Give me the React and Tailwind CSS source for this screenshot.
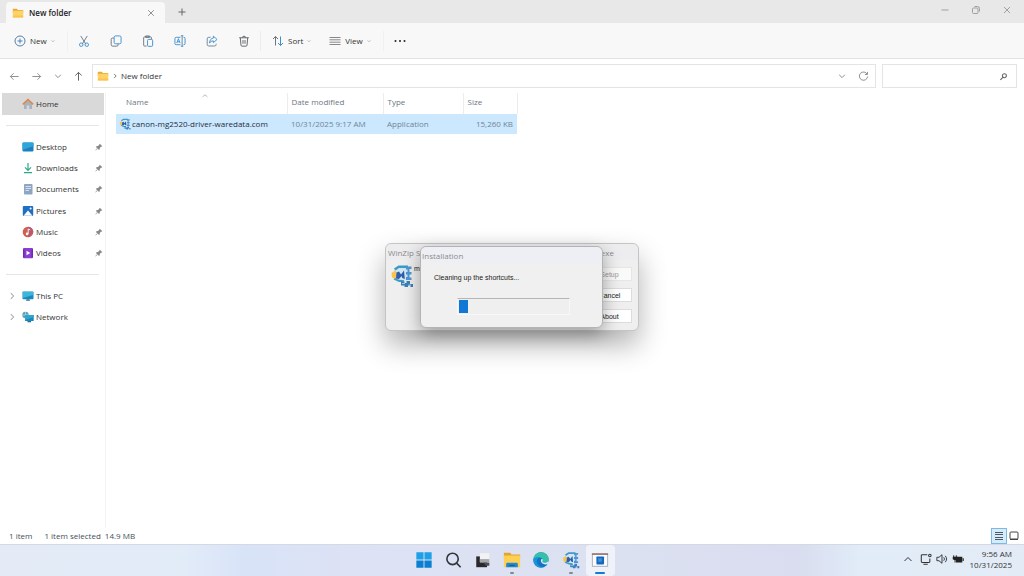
import React, { useState } from 'react';

const ChevronDown = ({ className }) => (
  <svg viewBox="0 0 10 10" className={className} fill="none" stroke="currentColor" strokeWidth="1.2">
    <path d="M1.5 3.5 5 7l3.5-3.5" />
  </svg>
);

const ChevronRight = ({ className }) => (
  <svg viewBox="0 0 10 10" className={className} fill="none" stroke="currentColor" strokeWidth="1.3">
    <path d="M3.5 1.5 7 5 3.5 8.5" />
  </svg>
);

const FolderIcon = ({ className }) => (
  <svg viewBox="0 0 12 12" className={className}>
    <path d="M.8 1.8h4l1.2 1.3h5.2V6H.8z" fill="#e9a93a" />
    <rect x=".8" y="3.8" width="10.4" height="6.8" rx=".6" fill="#ffd266" />
    <path d="M.8 8.6h10.4V10a.6.6 0 0 1-.6.6H1.4a.6.6 0 0 1-.6-.6z" fill="#f9c452" />
  </svg>
);

const WinZipIcon = ({ className }) => (
  <svg viewBox="0 0 24 24" className={className}>
    <path d="M4 4 9 2h9v14l-8 2-6-3z" fill="#cfe6f5" />
    <path d="M4 4.5 8.500 1.500H18V4H9L5.500 6.500z" fill="#3f9bc4" />
    <path d="M1.500 9 5 6.500l3 3.500-1 6-5-2.500z" fill="#f4c552" />
    <path d="M6.500 8.500 9 7.500l2 3 3-4 .8 8.500-2.500-1-.8-2-2.500 3-3-.5z" fill="#2f5cab" />
    <path d="M3.500 15.500 9 18h5v-1.800l-5-.4-4-1.800z" fill="#3f9bc4" />
    <path d="M16 2.500h5.500V5h-2v3h2v2.500h-2v3h2V16H16v-3h1.500v-2.500H16V8h1.500V5.500H16z" fill="#4f97d3" />
    <path d="M11 17.500h3.500V19h2v-2H20v3h3v3h-2.500v-1.500H18V23h-3.500v-1.500H11z" fill="#3a80ba" />
    <path d="M12 19.500h3M18.500 21h2.500" stroke="#bfe0f5" strokeWidth=".8" />
  </svg>
);

const PinIcon = () => (
  <svg viewBox="0 0 10 10" className="size-2" fill="#85898e">
    <path d="M6 .8 9.2 4l-1 .6-.5-.1L6 6.3l-.2 1.900-.8.5L3.3 7 1 9.3l-.5-.5L2.800 6.5 1.2 4.9l.6-.8 1.900-.2 1.800-1.700-.1-.5z" />
  </svg>
);

const HomeIcon = () => (
  <svg viewBox="0 0 12 12" className="size-3">
    <path d="M2 5.500 6 2l4 3.500V11H7.300V7.500H4.700V11H2z" fill="#a9b3bd" />
    <path d="M.8 6.400 6 1.600l5.200 4.800" fill="none" stroke="#e2854a" strokeWidth="1.5" />
  </svg>
);

const DesktopIcon = () => (
  <svg viewBox="0 0 12 12" className="size-3">
    <rect x=".5" y="1.5" width="11" height="9" rx="1" fill="#1c7fc0" />
    <path d="M1.500 1.500h9a1 1 0 0 1 1 1V5L.5 9V2.500a1 1 0 0 1 1-1z" fill="#2fa6d8" />
  </svg>
);

const DownloadsIcon = () => (
  <svg viewBox="0 0 12 12" className="size-3" fill="none" stroke="#2ea888" strokeWidth="1.2">
    <path d="M6 1v7M3 5.300l3 3 3-3M2 10.700h8" />
  </svg>
);

const DocumentsIcon = () => (
  <svg viewBox="0 0 12 12" className="size-3">
    <rect x="2" y="1" width="8.5" height="10.5" rx=".8" fill="#8fa5c4" />
    <path d="M3.500 3.500h5.500M3.500 5.500h5.500M3.500 7.500h3.500" stroke="#dfe8f3" strokeWidth=".9" />
  </svg>
);

const PicturesIcon = () => (
  <svg viewBox="0 0 12 12" className="size-3">
    <rect x=".8" y="1" width="10.4" height="10" rx="1" fill="#1f6fc4" />
    <path d="M1.500 10.800 6 5.500l4.500 5.300z" fill="#fff" />
    <circle cx="8.600" cy="3.600" r="1" fill="#fff" />
  </svg>
);

const MusicIcon = () => (
  <svg viewBox="0 0 12 12" className="size-3">
    <circle cx="6" cy="6" r="5.3" fill="#d0604f" />
    <path d="M6 .7A5.300 5.300 0 0 1 11.300 6L6 11.300z" fill="#b65a74" />
    <path d="M6.200 7.800V3l2 .9" fill="none" stroke="#fff" strokeWidth=".9" />
    <circle cx="5.100" cy="7.900" r="1.300" fill="#fff" />
  </svg>
);

const VideosIcon = () => (
  <svg viewBox="0 0 12 12" className="size-3">
    <rect x="1" y="1" width="10" height="10.2" rx="1" fill="#8a3fd1" />
    <path d="M1 2.200h1.500v8H1zM9.500 2.200H11v8H9.500z" fill="#6b2bb0" />
    <path d="M4.500 3.800 8.300 6l-3.800 2.200z" fill="#fff" />
  </svg>
);

const PcIcon = () => (
  <svg viewBox="0 0 12 12" className="size-3">
    <rect x=".5" y="1.5" width="11" height="7.8" rx=".8" fill="#1988bd" />
    <path d="M1 2h10v3L1 8z" fill="#3bb6dc" />
    <path d="M4.500 9.300h3l.5 1.500H4z" fill="#28708f" />
  </svg>
);

const NetworkIcon = () => (
  <svg viewBox="0 0 12 12" className="size-3">
    <circle cx="3.5" cy="4" r="3.2" fill="#5e9fb8" />
    <path d="M.5 4h6M3.500 1v6" stroke="#cfe6ef" strokeWidth=".6" />
    <rect x="3" y="4" width="8.7" height="6" rx=".6" fill="#1988bd" />
    <path d="M3 4h8.700v2L3 9z" fill="#2fa6d0" />
    <path d="M5.500 10h3.500v1.300H5.500z" fill="#28708f" />
  </svg>
);

const toolIcons = [
  {
    label: 'Cut',
    icon: (
      <>
        <path d="M3 1l5.500 9M10 1 4.500 10" stroke="#6a7580" />
        <circle cx="3.5" cy="10.5" r="1.9" stroke="#3f8fcb" />
        <circle cx="9.5" cy="10.5" r="1.9" stroke="#3f8fcb" />
      </>
    ),
  },
  {
    label: 'Copy',
    icon: (
      <>
        <rect x="4.5" y="1" width="7.5" height="8.5" rx="1.5" stroke="#3f8fcb" />
        <path d="M4.300 3.300H2.800A1.500 1.500 0 0 0 1.300 4.800v5.500a1.800 1.800 0 0 0 1.800 1.800h4.200a1.500 1.500 0 0 0 1.500-1.500V9.600" stroke="#6a7580" />
      </>
    ),
  },
  {
    label: 'Paste',
    icon: (
      <>
        <path d="M5 12H2.800a1 1 0 0 1-1-1V3a1 1 0 0 1 1-1h6.400a1 1 0 0 1 1 1v1.500M4 2.600V1h4v1.600z" stroke="#6a7580" />
        <rect x="6" y="4.8" width="5.5" height="7.5" rx="1" stroke="#3f8fcb" />
      </>
    ),
  },
  {
    label: 'Rename',
    icon: (
      <>
        <path d="M7 2.500H2.500A1.500 1.500 0 0 0 1 4v5a1.500 1.500 0 0 0 1.500 1.500H7M10.300 2.500A1.500 1.500 0 0 1 12 4v5a1.500 1.500 0 0 1-1.700 1.500" stroke="#3f8fcb" />
        <path d="M3 8.800 4.800 4l1.800 4.800M3.600 7.300H6" stroke="#3f8fcb" />
        <path d="M7.500.8h2.600M7.500 12.200h2.600M8.800.8v11.400" stroke="#4a86b8" />
      </>
    ),
  },
  {
    label: 'Share',
    icon: (
      <>
        <path d="M5 2.500H3A1.700 1.700 0 0 0 1.300 4.200v6A1.700 1.700 0 0 0 3 11.900h6.300A1.700 1.700 0 0 0 11 10.200V9.500" stroke="#6a8296" />
        <path d="M8 1.300 12 4.800 8 8.300V6.400C5.800 6.400 4.600 7.200 3.800 8.800 4 5.500 5.500 3.600 8 3.300z" stroke="#3f8fcb" />
      </>
    ),
  },
  {
    label: 'Delete',
    icon: (
      <>
        <path d="M1.300 3h10.400M4.800 3a1.700 1.700 0 0 1 3.400 0M2.500 3l.7 8a1.200 1.200 0 0 0 1.200 1.100h4.200A1.200 1.200 0 0 0 9.800 11l.7-8M5.400 5.500v4M7.600 5.500v4" stroke="#5d6165" />
      </>
    ),
  },
];

const quickAccess = [
  { label: 'Desktop', Icon: DesktopIcon },
  { label: 'Downloads', Icon: DownloadsIcon },
  { label: 'Documents', Icon: DocumentsIcon },
  { label: 'Pictures', Icon: PicturesIcon },
  { label: 'Music', Icon: MusicIcon },
  { label: 'Videos', Icon: VideosIcon },
];

const drives = [
  { label: 'This PC', Icon: PcIcon },
  { label: 'Network', Icon: NetworkIcon },
];

const files = [
  { name: 'canon-mg2520-driver-waredata.com', modified: '10/31/2025 9:17 AM', type: 'Application', size: '15,260 KB' },
];

const TitleBar = () => (
  <header className="flex h-[23px] items-stretch bg-[#e8e8e8] pl-1.5">
    <div className="mt-0.5 flex w-[159px] items-center rounded-t bg-[#f8f8f8] pr-2.5 pl-1.5">
      <FolderIcon className="size-3" />
      <span className="ml-[5px] flex-1 font-semibold text-[#222]">New folder</span>
      <button type="button" aria-label="Close tab" className="text-[#777]">
        <svg viewBox="0 0 10 10" className="size-2" fill="none" stroke="currentColor">
          <path d="M1.500 1.500l7 7M8.500 1.500l-7 7" />
        </svg>
      </button>
    </div>
    <button type="button" aria-label="New tab" className="ml-3 text-[#666]">
      <svg viewBox="0 0 10 10" className="size-2.5" fill="none" stroke="currentColor">
        <path d="M5 1.500v7M1.500 5h7" />
      </svg>
    </button>
    <div className="ml-auto flex h-5 items-center gap-[21px] pr-3 text-[#a0a0a0]">
      <button type="button" aria-label="Minimize">
        <svg viewBox="0 0 10 10" className="size-2.5" fill="none" stroke="currentColor">
          <path d="M1.500 5h7" />
        </svg>
      </button>
      <button type="button" aria-label="Restore">
        <svg viewBox="0 0 10 10" className="size-2.5" fill="none" stroke="currentColor">
          <rect x="1.5" y="3" width="5.5" height="5.5" rx="1" />
          <path d="M3.500 1.500h3A2 2 0 0 1 8.500 3.500v3" />
        </svg>
      </button>
      <button type="button" aria-label="Close">
        <svg viewBox="0 0 10 10" className="size-2.5" fill="none" stroke="currentColor">
          <path d="M2 2l6 6M8 2l-6 6" />
        </svg>
      </button>
    </div>
  </header>
);

const Toolbar = () => (
  <div className="flex h-9 items-center border-b border-[#e3e3e3] bg-[#f8f8f8] pl-3.5 text-[#333]">
    <button type="button" className="flex w-[53px] items-center">
      <svg viewBox="0 0 12 12" className="size-3" fill="none">
        <circle cx="6" cy="6" r="5" stroke="#5b7f9e" />
        <path d="M6 3.500v5M3.500 6h5" stroke="#3a87c8" />
      </svg>
      <span className="ml-1 flex-1 text-left">New</span>
      <ChevronDown className="mr-3 size-1 text-[#777]" />
    </button>
    <div className="h-5 w-px bg-[#f0f0f0]" />
    {toolIcons.map((tool) => (
      <button key={tool.label} type="button" aria-label={tool.label} className="flex w-8 justify-center">
        <svg viewBox="0 0 13 13" className="size-3" fill="none">{tool.icon}</svg>
      </button>
    ))}
    <div className="h-5 w-px bg-[#ececec]" />
    <button type="button" className="ml-[11px] flex items-center">
      <svg viewBox="0 0 12 12" className="size-3" fill="none">
        <path d="M3.500 10.500v-9M1 4l2.500-2.500L6 4" stroke="#6a7580" />
        <path d="M8.500 1.500v9M6 8l2.500 2.500L11 8" stroke="#3f8fcb" />
      </svg>
      <span className="mr-1 ml-1">Sort</span>
      <ChevronDown className="size-1 text-[#777]" />
    </button>
    <button type="button" className="ml-[18px] flex items-center">
      <svg viewBox="0 0 12 12" className="size-3" fill="none" stroke="#888">
        <path d="M.5 2.500h11M.5 4.800h11M.5 7.200h11M.5 9.500h11" />
      </svg>
      <span className="mr-1 ml-1">View</span>
      <ChevronDown className="size-1 text-[#777]" />
    </button>
    <div className="ml-3 h-5 w-px bg-[#f0f0f0]" />
    <button type="button" aria-label="See more" className="ml-2.5">
      <svg viewBox="0 0 12 12" className="size-3" fill="#222">
        <circle cx="1.500" cy="6" r="1" />
        <circle cx="6" cy="6" r="1" />
        <circle cx="10.500" cy="6" r="1" />
      </svg>
    </button>
  </div>
);

const AddressBar = () => (
  <div className="flex h-[34px] items-center pr-[7px] text-[#888]">
    <div className="flex w-[92px] items-center justify-between pr-2 pl-[9px]">
      <button type="button" aria-label="Back">
        <svg viewBox="0 0 12 12" className="size-[11px]" fill="none" stroke="currentColor">
          <path d="M10.500 6h-9M5 2.500 1.500 6 5 9.500" />
        </svg>
      </button>
      <button type="button" aria-label="Forward">
        <svg viewBox="0 0 12 12" className="size-[11px]" fill="none" stroke="currentColor">
          <path d="M1.500 6h9M7 2.500 10.500 6 7 9.500" />
        </svg>
      </button>
      <button type="button" aria-label="Recent locations">
        <ChevronDown className="size-2" />
      </button>
      <button type="button" aria-label="Up" className="text-[#555]">
        <svg viewBox="0 0 12 12" className="size-[11px]" fill="none" stroke="currentColor">
          <path d="M6 10.500v-9M2.500 5 6 1.500 9.500 5" />
        </svg>
      </button>
    </div>
    <div className="flex h-6 flex-1 items-center border border-[#e4e4e4] bg-white pr-1.5 pl-1">
      <FolderIcon className="size-3" />
      <ChevronRight className="mx-[3px] size-1.5 text-[#555]" />
      <a href="#" className="flex-1 text-[#333]">New folder</a>
      <button type="button" aria-label="Previous locations">
        <ChevronDown className="size-2" />
      </button>
      <button type="button" aria-label="Refresh" className="ml-3">
        <svg viewBox="0 0 12 12" className="size-[11px]" fill="none" stroke="currentColor">
          <path d="M10 3.500A4.500 4.500 0 1 0 10.500 6M10.300 1v2.800H7.500" />
        </svg>
      </button>
    </div>
    <label className="ml-1.5 flex h-6 w-[135px] items-center border border-[#e4e4e4] bg-white pr-2">
      <input type="text" aria-label="Search" className="min-w-0 flex-1 px-2 outline-none" />
      <svg viewBox="0 0 10 10" className="size-[9px]" fill="none" stroke="#666" strokeWidth="1.2">
        <circle cx="6" cy="4.2" r="2.2" />
        <path d="M4.300 5.900 1.500 8.800" />
      </svg>
    </label>
  </div>
);

const Sidebar = () => (
  <nav className="w-[106px] border-r border-[#f3f3f3] text-[#333]">
    <a href="#" className="mr-px ml-0.5 flex h-[22px] items-center bg-[#d9d9d9] pl-5">
      <HomeIcon />
      <span className="ml-0.5">Home</span>
    </a>
    <div className="mx-1.5 mt-2.5 h-px bg-[#e6e6e6]" />
    <ul className="mt-2.5 grid h-32 grid-rows-6">
      {quickAccess.map(({ label, Icon }) => (
        <li key={label} className="flex items-center pr-0.5 pl-[22px]">
          <a href="#" className="flex flex-1 items-center">
            <Icon />
            <span className="ml-0.5">{label}</span>
          </a>
          <PinIcon />
        </li>
      ))}
    </ul>
    <div className="mx-1.5 mt-2.5 h-px bg-[#e6e6e6]" />
    <ul className="mt-2.5">
      {drives.map(({ label, Icon }) => (
        <li key={label} className="flex h-[21px] items-center pl-2">
          <ChevronRight className="mr-1.5 size-2 text-[#aaa]" />
          <a href="#" className="flex items-center">
            <Icon />
            <span className="ml-0.5">{label}</span>
          </a>
        </li>
      ))}
    </ul>
  </nav>
);

const FileList = () => (
  <section className="flex-1 pl-2.5">
    <table className="w-[401px] table-fixed border-collapse text-left">
      <thead>
        <tr className="h-[21px] text-[#6d7682]">
          <th className="relative w-[171px] border-r border-[#ececec] pb-1 pl-2.5 font-normal">
            Name
            <svg viewBox="0 0 10 10" className="absolute top-0 left-[86px] size-1.5" fill="none" stroke="#888">
              <path d="M1 6.500 5 3l4 3.500" />
            </svg>
          </th>
          <th className="w-24 border-r border-[#ececec] pb-1 pl-1 font-normal">Date modified</th>
          <th className="w-20 border-r border-[#ececec] pb-1 pl-1 font-normal">Type</th>
          <th className="w-[54px] border-r border-[#ececec] pb-1 pl-1 font-normal">Size</th>
        </tr>
      </thead>
      <tbody>
        {files.map((file) => (
          <tr key={file.name} className="h-5 bg-[#cce8ff] text-[#6f8595]">
            <td className="pl-[3px]">
              <a href="#" className="flex items-center text-[#1f2d3a]">
                <WinZipIcon className="size-3" />
                <span className="ml-px whitespace-nowrap">{file.name}</span>
              </a>
            </td>
            <td className="pl-1 whitespace-nowrap">{file.modified}</td>
            <td className="pl-1">{file.type}</td>
            <td className="pr-1 text-right whitespace-nowrap">{file.size}</td>
          </tr>
        ))}
      </tbody>
    </table>
  </section>
);

const StatusBar = () => (
  <footer className="flex h-4 items-center pr-1 pl-[9px] text-[#444f5a]">
    <span>1 item</span>
    <span className="ml-3">1 item selected</span>
    <span className="ml-1">14.9 MB</span>
    <div className="ml-auto flex items-center">
      <button type="button" aria-label="Details view" className="border border-[#7db9e3] bg-[#d6ecfb] p-px">
        <svg viewBox="0 0 12 12" className="size-3" fill="none" stroke="#4a5a66">
          <path d="M2 2.500h8M2 4.500h8M2 7.500h8M2 9.500h8" />
        </svg>
      </button>
      <button type="button" aria-label="Large icons view" className="ml-px">
        <svg viewBox="0 0 12 12" className="size-3" fill="none" stroke="#444">
          <rect x="2" y="2" width="8" height="7" rx="1" />
          <path d="M2 9.500h8" />
        </svg>
      </button>
    </div>
  </footer>
);

const InstallerDialogs = () => (
  <div className="font-['Liberation_Sans',sans-serif] text-[7px] leading-[9px] text-[#222]">
    <section
      aria-label="WinZip Self-Extractor"
      className="absolute top-[243px] left-[385px] h-[88px] w-[254px] rounded-md border border-[#c4c4c4] bg-[#efefef] shadow-[0_14px_28px_rgba(0,0,0,0.3)]"
    >
      <div className="flex h-4 items-center justify-between rounded-t-md bg-[#ededef] pr-6 pl-0.5 font-['Open_Sans',sans-serif] text-[8px] text-[#8b8b8b]">
        <span>WinZip S</span>
        <span>exe</span>
      </div>
      <div className="flex justify-between pr-1.5 pl-1">
        <div className="flex items-start pt-1">
          <WinZipIcon className="size-6" />
          <span>m</span>
        </div>
        <div className="flex flex-col gap-[7px] pt-[7px]">
          <button type="button" disabled className="h-3.5 w-[45px] border border-[#e6e6e6] bg-[#fafafa] text-[#999]">Setup</button>
          <button type="button" className="h-3.5 w-[45px] border border-[#dcdcdc] bg-white">Cancel</button>
          <button type="button" className="h-3.5 w-[45px] border border-[#dcdcdc] bg-white">About</button>
        </div>
      </div>
    </section>
    <section
      aria-label="Installation"
      className="absolute top-[246px] left-[420px] h-[82px] w-[183px] rounded-md border border-[#b4b4b4] bg-[#f0f0f0] shadow-[0_6px_18px_rgba(0,0,0,0.35)]"
    >
      <div className="flex h-4 items-center rounded-t-md bg-[#eeeff5] pl-px font-['Open_Sans',sans-serif] text-[8px] text-[#8b8b8b]">
        Installation
      </div>
      <p className="mt-2.5 ml-[13px]">Cleaning up the shortcuts...</p>
      <div
        role="progressbar"
        aria-label="Progress"
        aria-valuenow={8}
        className="mt-4 mr-8 ml-9 h-[17px] border border-[#f8f8f8] border-t-[#b5b5b5] bg-[#efefef] p-px"
      >
        <div className="h-full bg-[#0f78d7]" style={{ width: '8%' }} />
      </div>
    </section>
  </div>
);

const taskbarApps = [
  {
    label: 'Start',
    icon: (
      <>
        <path d="M1.500 1.500h8v8h-8zM10.500 1.500h8v8h-8z" fill="#1fa0e6" />
        <path d="M1.500 10.500h8v8h-8zM10.500 10.500h8v8h-8z" fill="#0b7fd0" />
      </>
    ),
  },
  {
    label: 'Search',
    icon: (
      <g fill="none" stroke="#33363b" strokeWidth="1.8">
        <circle cx="9.5" cy="8.8" r="6.3" />
        <path d="M14 13.500 18.500 18" />
      </g>
    ),
  },
  {
    label: 'Task View',
    icon: (
      <>
        <path d="M2.500 6h12v12h-12z" fill="#29292b" />
        <path d="M6.500 2.500H17V12H6.500z" fill="#f3f3f5" />
        <path d="M6.500 9H17v4H6.500z" fill="#a5a6aa" />
        <path d="M11 13h6v3.500h-4z" fill="#4d4e52" />
      </>
    ),
  },
  {
    label: 'File Explorer',
    state: 'open',
    icon: (
      <>
        <path d="M1 2h7l1.500 2H19v5H1z" fill="#e5a32e" />
        <rect x="1" y="5" width="18" height="13" rx="1" fill="#fdd053" />
        <path d="M5 13h10a1.500 1.500 0 0 1 1.500 1.500V18h-13v-3.500A1.500 1.500 0 0 1 5 13z" fill="#2087d3" />
        <path d="M7 15.500h6v1.200H7z" fill="#115a9c" />
      </>
    ),
  },
  {
    label: 'Edge',
    icon: (
      <>
        <circle cx="10" cy="10" r="8.5" fill="#1275c4" />
        <path d="M1.600 9C2.300 4.500 5.800 1.500 10.200 1.500c5 0 8.300 3.500 8.300 7.300 0 2.700-2 4.200-4.300 4.200-2 0-3-.8-2.400-1.800.7-1.100.4-3.700-3-3.900C5.600 7.100 2.800 8 1.600 9z" fill="#36c0a9" />
        <path d="M1.600 9c1.500-2 4.500-2.600 7-1.800-3 .8-4 4-2.700 6.600 1.100 2.300 3.400 3.900 6.200 4C6.500 19.500.7 15.500 1.600 9z" fill="#1a94d8" />
        <path d="M11.700 11.200c-.6 1 .4 1.800 2.500 1.800 1.400 0 2.600-.5 3.400-1.400l1 .4-1 2.200c-3 1.600-7 .3-7.700-2.700-.2-1.400.5-2.600 1.500-2.800.7.800.7 1.700.3 2.500z" fill="#dfeef8" />
      </>
    ),
  },
  { label: 'WinZip', state: 'open' },
  {
    label: 'Installation',
    state: 'active',
    icon: (
      <>
        <rect x="1.5" y="3" width="17" height="14" fill="#fbfbfd" stroke="#a3abb8" />
        <path d="M1 3.500h18" stroke="#8a6a62" strokeWidth="1.5" />
        <rect x="6" y="6" width="8.5" height="9" rx="1" fill="#1568bd" />
        <path d="M8 8h4v4H8z" fill="#3b8fdb" />
      </>
    ),
  },
];

const Taskbar = () => (
  <div className="grid h-8 grid-cols-[1fr_auto_1fr] items-center border-t border-[#d5d9e4] bg-[linear-gradient(90deg,#e4ebf7,#e2ebf8_18%,#d8e3f8_24%,#dde2f4_34%,#dce1f2_60%,#d9ddef_78%,#e1ecf8_84%,#e3ecf6)]">
    <div />
    <div className="grid h-full w-[206px] grid-cols-7">
      {taskbarApps.map((app) => (
        <button
          key={app.label}
          type="button"
          aria-label={app.label}
          className={`flex flex-col items-center justify-between rounded-sm pt-1.5 pb-0.5 ${app.state === 'active' ? 'bg-[#f0f2fa]' : ''}`}
        >
          {app.icon ? (
            <svg viewBox="0 0 20 20" className="size-[18px]">{app.icon}</svg>
          ) : (
            <WinZipIcon className="size-[18px]" />
          )}
          {app.state === 'active' && <span className="h-0.5 w-2.5 rounded-full bg-[#1779d4]" />}
          {app.state === 'open' && <span className="h-0.5 w-1 rounded-full bg-[#84888f]" />}
        </button>
      ))}
    </div>
    <div className="flex items-center justify-end pr-3 pb-1 text-[#333]">
      <button type="button" aria-label="Show hidden icons">
        <svg viewBox="0 0 10 10" className="size-2.5" fill="none" stroke="currentColor">
          <path d="M1.500 7 5 3.500 8.500 7" />
        </svg>
      </button>
      <svg viewBox="0 0 14 14" className="ml-[7px] size-3" fill="none" stroke="currentColor" strokeWidth="1.2">
        <path d="M8.500 2H2.500a1 1 0 0 0-1 1v7a1 1 0 0 0 1 1h8a1 1 0 0 0 1-1V6.500M4 13h5" />
        <circle cx="11.5" cy="3" r="1.5" />
      </svg>
      <svg viewBox="0 0 14 14" className="ml-1 size-3" fill="none" stroke="currentColor" strokeWidth="1.1">
        <path d="M1 5v4h2.500L7 12V2L3.500 5zM9 5c1 1 1 3 0 4M10.800 3.300c2 2.200 2 5.200 0 7.400" />
      </svg>
      <svg viewBox="0 0 14 14" className="ml-1 size-3" fill="#222">
        <path d="M4.500 4.500H12v6.500H4.500zM12.500 6.200h1.200v3h-1.200zM1.500 2.500h1v2h2v-2h1v4.500l-1.500 1.500v2.500h-1V8.500L1 7V4.500h.5z" />
        <path d="M1 4.500h6v3H1z" />
      </svg>
      <time className="ml-1.5 text-right leading-[11px]">
        9:56 AM
        <br />
        10/31/2025
      </time>
    </div>
  </div>
);

const App = () => {
  const [installing] = useState(true);

  return (
    <div className="relative flex h-screen flex-col overflow-hidden bg-white font-['Open_Sans','Noto_Sans',sans-serif] text-[8px] leading-3">
      <TitleBar />
      <Toolbar />
      <AddressBar />
      <main className="flex min-h-0 flex-1">
        <Sidebar />
        <FileList />
      </main>
      <StatusBar />
      <Taskbar />
      {installing && <InstallerDialogs />}
    </div>
  );
};

export default App;
